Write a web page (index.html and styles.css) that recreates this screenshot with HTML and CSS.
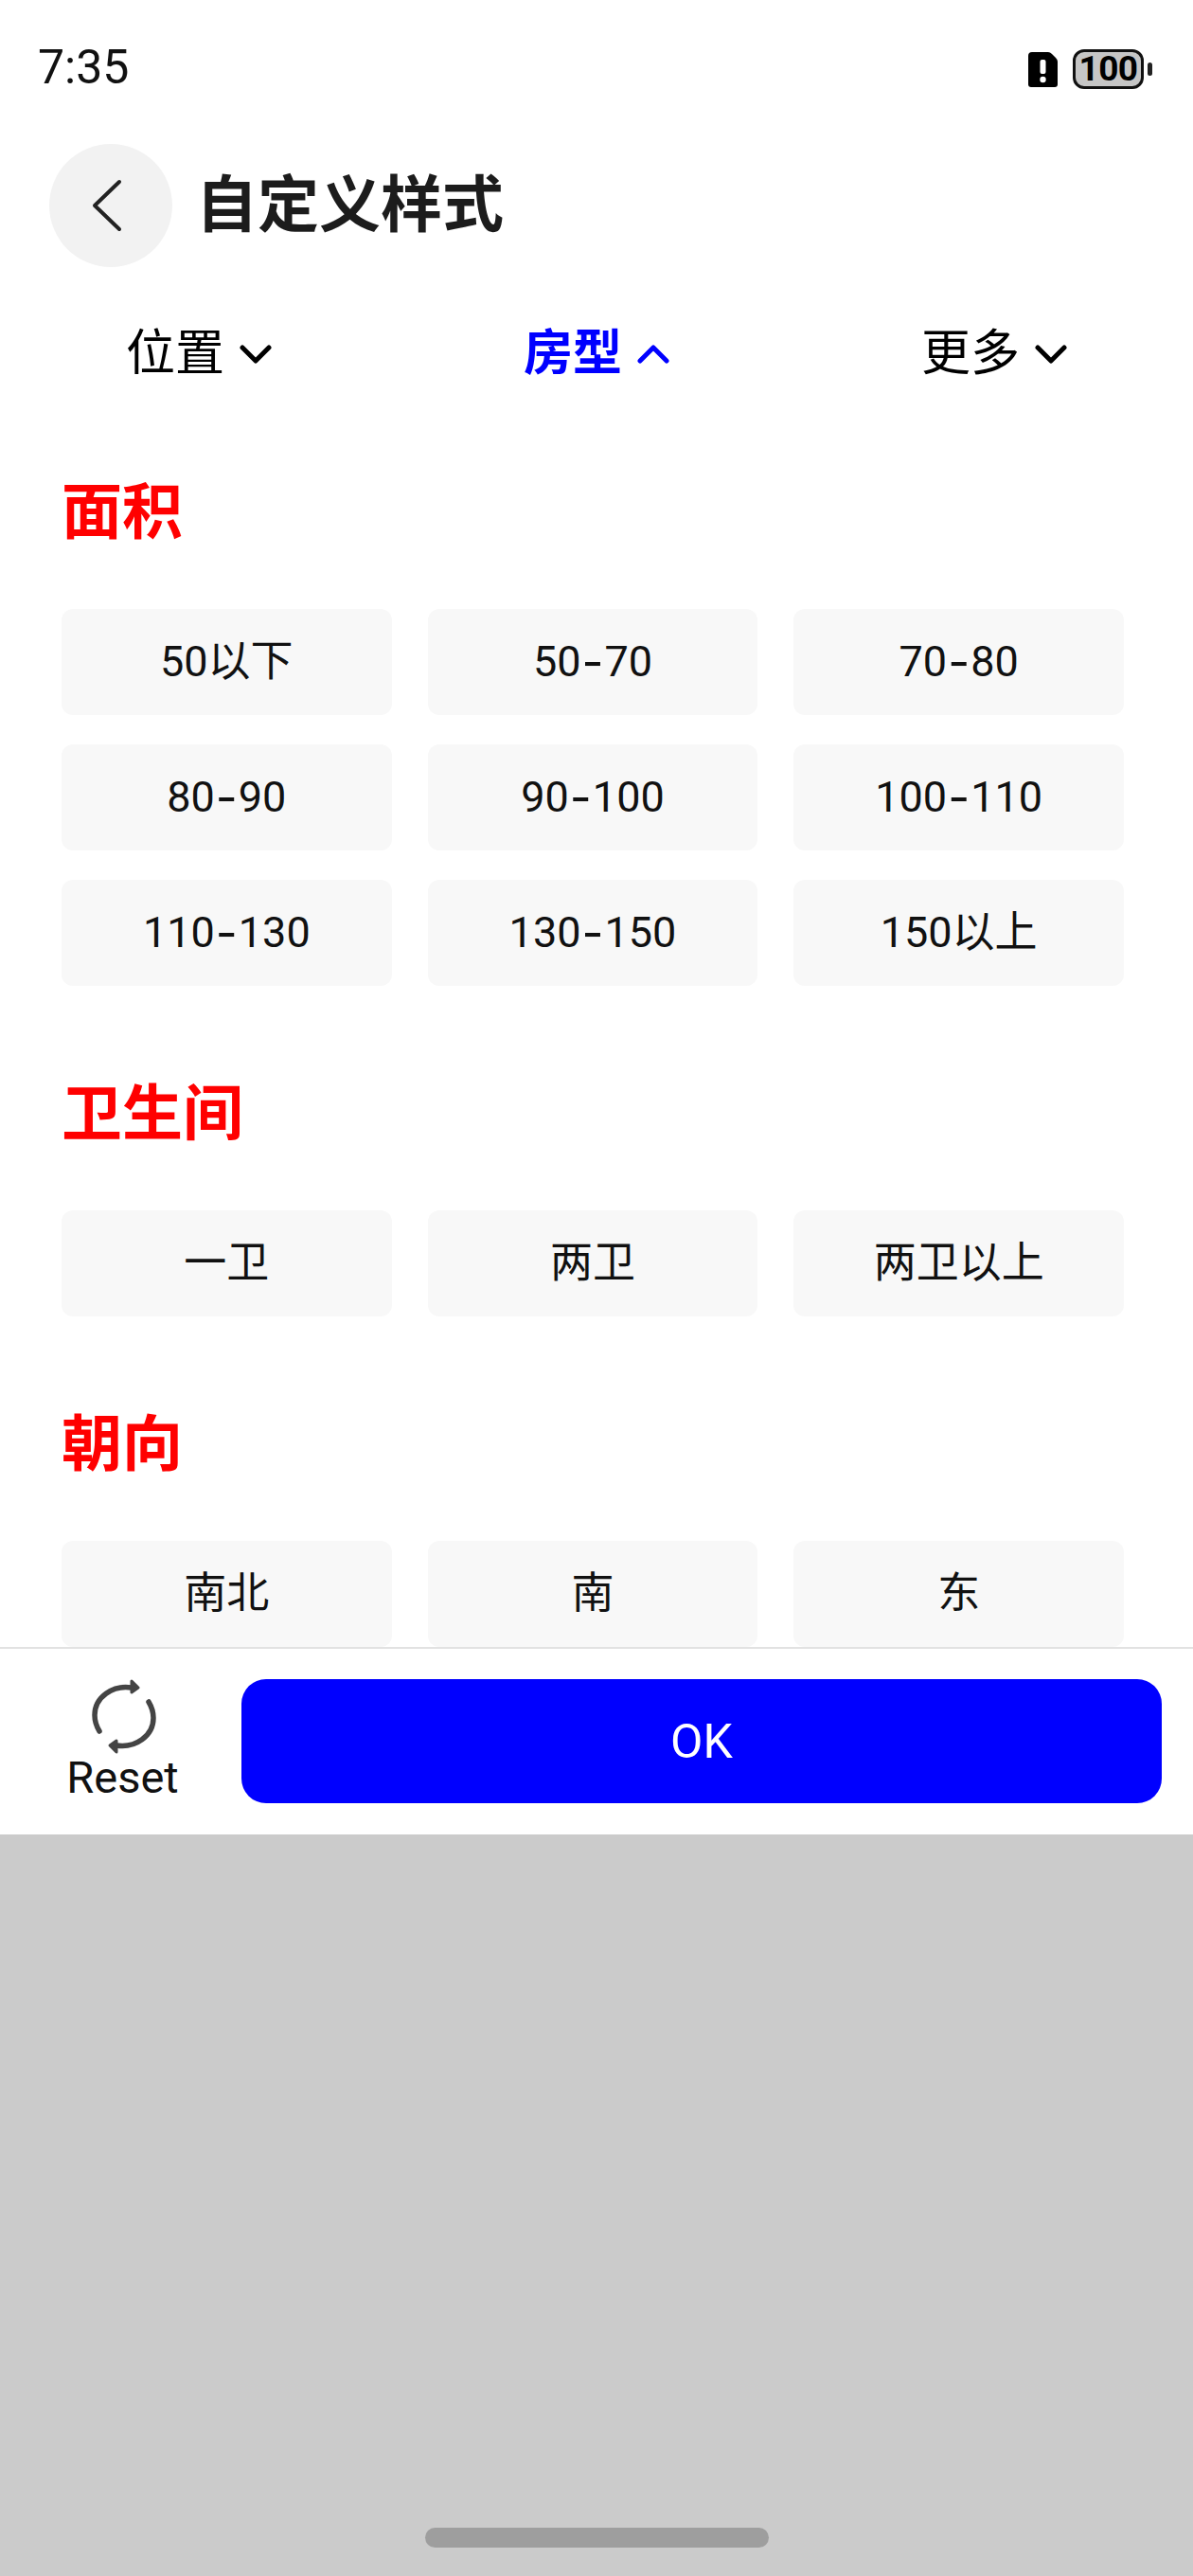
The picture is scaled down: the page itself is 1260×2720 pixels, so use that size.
FILE: index.html
```html
<!DOCTYPE html>
<html lang="zh">
<head>
<meta charset="utf-8">
<title>自定义样式</title>
<link rel="stylesheet" href="styles.css">
</head>
<body>
<div class="app">
  <div class="panel">
    <div class="status">
      <span class="time">7:35</span>
      <div class="status-icons">
        <svg class="sim" viewBox="0 0 31 37"><path d="M4 0H21Q23 0 25 2L29 6Q31 8 31 10V34A3 3 0 0 1 28 37H3A3 3 0 0 1 0 34V4A4 4 0 0 1 4 0Z" fill="#000"/><rect x="12.500" y="8" width="6" height="15" rx="2" fill="#fff"/><circle cx="15.500" cy="29" r="3.200" fill="#fff"/></svg>
        <div class="battery"><span class="battery-level">100</span></div>
        <span class="battery-tip"></span>
      </div>
    </div>
    <div class="header">
      <div class="back">
        <svg class="back-icon" viewBox="0 0 32 56"><path d="M29 3L3 28L29 53" fill="none" stroke="#222" stroke-width="4" stroke-linecap="round" stroke-linejoin="round"/></svg>
      </div>
      <h1 class="title">自定义样式</h1>
    </div>
    <div class="tabs">
      <div class="tab"><span>位置</span><svg class="chev" viewBox="0 0 34 22"><path d="M3 4L17 18L31 4" fill="none" stroke="currentColor" stroke-width="5" stroke-linecap="round" stroke-linejoin="round"/></svg></div>
      <div class="tab tab-active"><span>房型</span><svg class="chev" viewBox="0 0 34 22"><path d="M3 18L17 4L31 18" fill="none" stroke="currentColor" stroke-width="5" stroke-linecap="round" stroke-linejoin="round"/></svg></div>
      <div class="tab"><span>更多</span><svg class="chev" viewBox="0 0 34 22"><path d="M3 4L17 18L31 4" fill="none" stroke="currentColor" stroke-width="5" stroke-linecap="round" stroke-linejoin="round"/></svg></div>
    </div>
    <div class="scroll">
      <section class="group">
        <h2 class="group-title">面积</h2>
        <div class="options">
          <div class="option">50以下</div><div class="option">50<span class="dash">-</span>70</div><div class="option">70<span class="dash">-</span>80</div>
          <div class="option">80<span class="dash">-</span>90</div><div class="option">90<span class="dash">-</span>100</div><div class="option">100<span class="dash">-</span>110</div>
          <div class="option">110<span class="dash">-</span>130</div><div class="option">130<span class="dash">-</span>150</div><div class="option">150以上</div>
        </div>
      </section>
      <section class="group">
        <h2 class="group-title">卫生间</h2>
        <div class="options">
          <div class="option">一卫</div><div class="option">两卫</div><div class="option">两卫以上</div>
        </div>
      </section>
      <section class="group">
        <h2 class="group-title">朝向</h2>
        <div class="options">
          <div class="option">南北</div><div class="option">南</div><div class="option">东</div>
        </div>
      </section>
    </div>
    <div class="footer">
      <div class="reset">
        <svg class="reset-icon" viewBox="0 0 72 80"><path d="M44 10C24 7 5 20 5 39C5 46 7 51 10 56" fill="none" stroke="#444" stroke-width="5.500" stroke-linecap="round"/><path d="M44 3L51 10L44 15Z" fill="#444" stroke="#444" stroke-width="3" stroke-linejoin="round"/><path d="M62 25C65 30 67 35 67 42C67 61 48 74 28 71" fill="none" stroke="#444" stroke-width="5.500" stroke-linecap="round"/><path d="M28 78L21 71L28 66Z" fill="#444" stroke="#444" stroke-width="3" stroke-linejoin="round"/></svg>
        <span class="reset-label">Reset</span>
      </div>
      <div class="ok">OK</div>
    </div>
  </div>
  <div class="scrim"><div class="home-bar"></div></div>
</div>
</body>
</html>
```

FILE: styles.css
```css
* { box-sizing: border-box; }
html, body { margin: 0; padding: 0; }
body { font-family: Roboto, "Noto Sans CJK SC", sans-serif; color: #000; background: #fff; }
.app { width: 1260px; height: 2720px; display: flex; flex-direction: column; overflow: hidden; }
.panel { height: 1937px; display: flex; flex-direction: column; background: #fff; }

.status { height: 140px; flex: none; display: flex; justify-content: space-between; align-items: flex-start; padding: 43px 43px 0 40px; }
.time { font-size: 50px; line-height: 56px; color: #111; }
.status-icons { display: flex; align-items: center; padding-top: 9px; }
.sim { width: 31px; height: 37px; margin-right: 16px; }
.battery { width: 75px; height: 42px; border: 3px solid #111; border-radius: 12px; background: #c6c6c6; display: flex; align-items: center; justify-content: center; }
.battery-level { font-size: 37px; line-height: 36px; font-weight: 700; color: #000; letter-spacing: -0.5px; }
.battery-tip { width: 5px; height: 14px; border-radius: 3px; background: #222; margin-left: 4px; }

.header { height: 142px; flex: none; display: flex; align-items: flex-start; padding: 12px 0 0 52px; }
.back { width: 130px; height: 130px; border-radius: 50%; background: #f2f2f2; display: flex; align-items: center; justify-content: center; }
.back-icon { width: 32px; height: 56px; margin-right: 8px; }
.title { margin: 0 0 0 25px; font-size: 65px; line-height: 130px; font-weight: 700; color: #1c1c1c; }

.tabs { flex: none; display: grid; grid-template-columns: repeat(3, 1fr); height: 125px; padding-top: 58px; }
.tab { height: 67px; display: flex; align-items: center; justify-content: center; gap: 16px; font-size: 52px; line-height: 67px; color: #000; }
.tab-active { color: #0000ff; font-weight: 700; }
.chev { width: 34px; height: 22px; }

.scroll { flex: 1; min-height: 0; overflow: hidden; padding: 90px 73px 0 65px; }
.group { margin-bottom: 91px; }
.group-title { margin: 0 0 56px; font-size: 64px; line-height: 90px; font-weight: 700; color: #ff0000; }
.options { display: grid; grid-template-columns: repeat(3, 1fr); column-gap: 38px; row-gap: 31px; }
.option { height: 112px; display: flex; align-items: center; justify-content: center; border-radius: 12px; background: #f8f8f8; font-size: 45px; line-height: 60px; color: #111; }
.dash { font-family: Inter, sans-serif; font-size: 50px; margin: 0 1px; }

.footer { height: 198px; flex: none; display: flex; align-items: flex-start; border-top: 2px solid #e2e2e2; padding: 32px 33px 0 0; }
.reset { width: 255px; flex: none; display: flex; flex-direction: column; align-items: center; margin-top: -1px; margin-left: 2px; margin-right: -2px; }
.reset-icon { width: 72px; height: 80px; margin-left: 3px; }
.reset-label { font-size: 47px; line-height: 50px; color: #111; }
.ok { flex: 1; height: 131px; display: flex; align-items: center; justify-content: center; border-radius: 26px; background: #0000ff; color: #fff; font-size: 50px; }

.scrim { flex: 1; background: #cbcbcb; display: flex; justify-content: center; align-items: flex-end; padding-bottom: 30px; }
.home-bar { width: 363px; height: 21px; border-radius: 11px; background: #9e9e9e; }
```
